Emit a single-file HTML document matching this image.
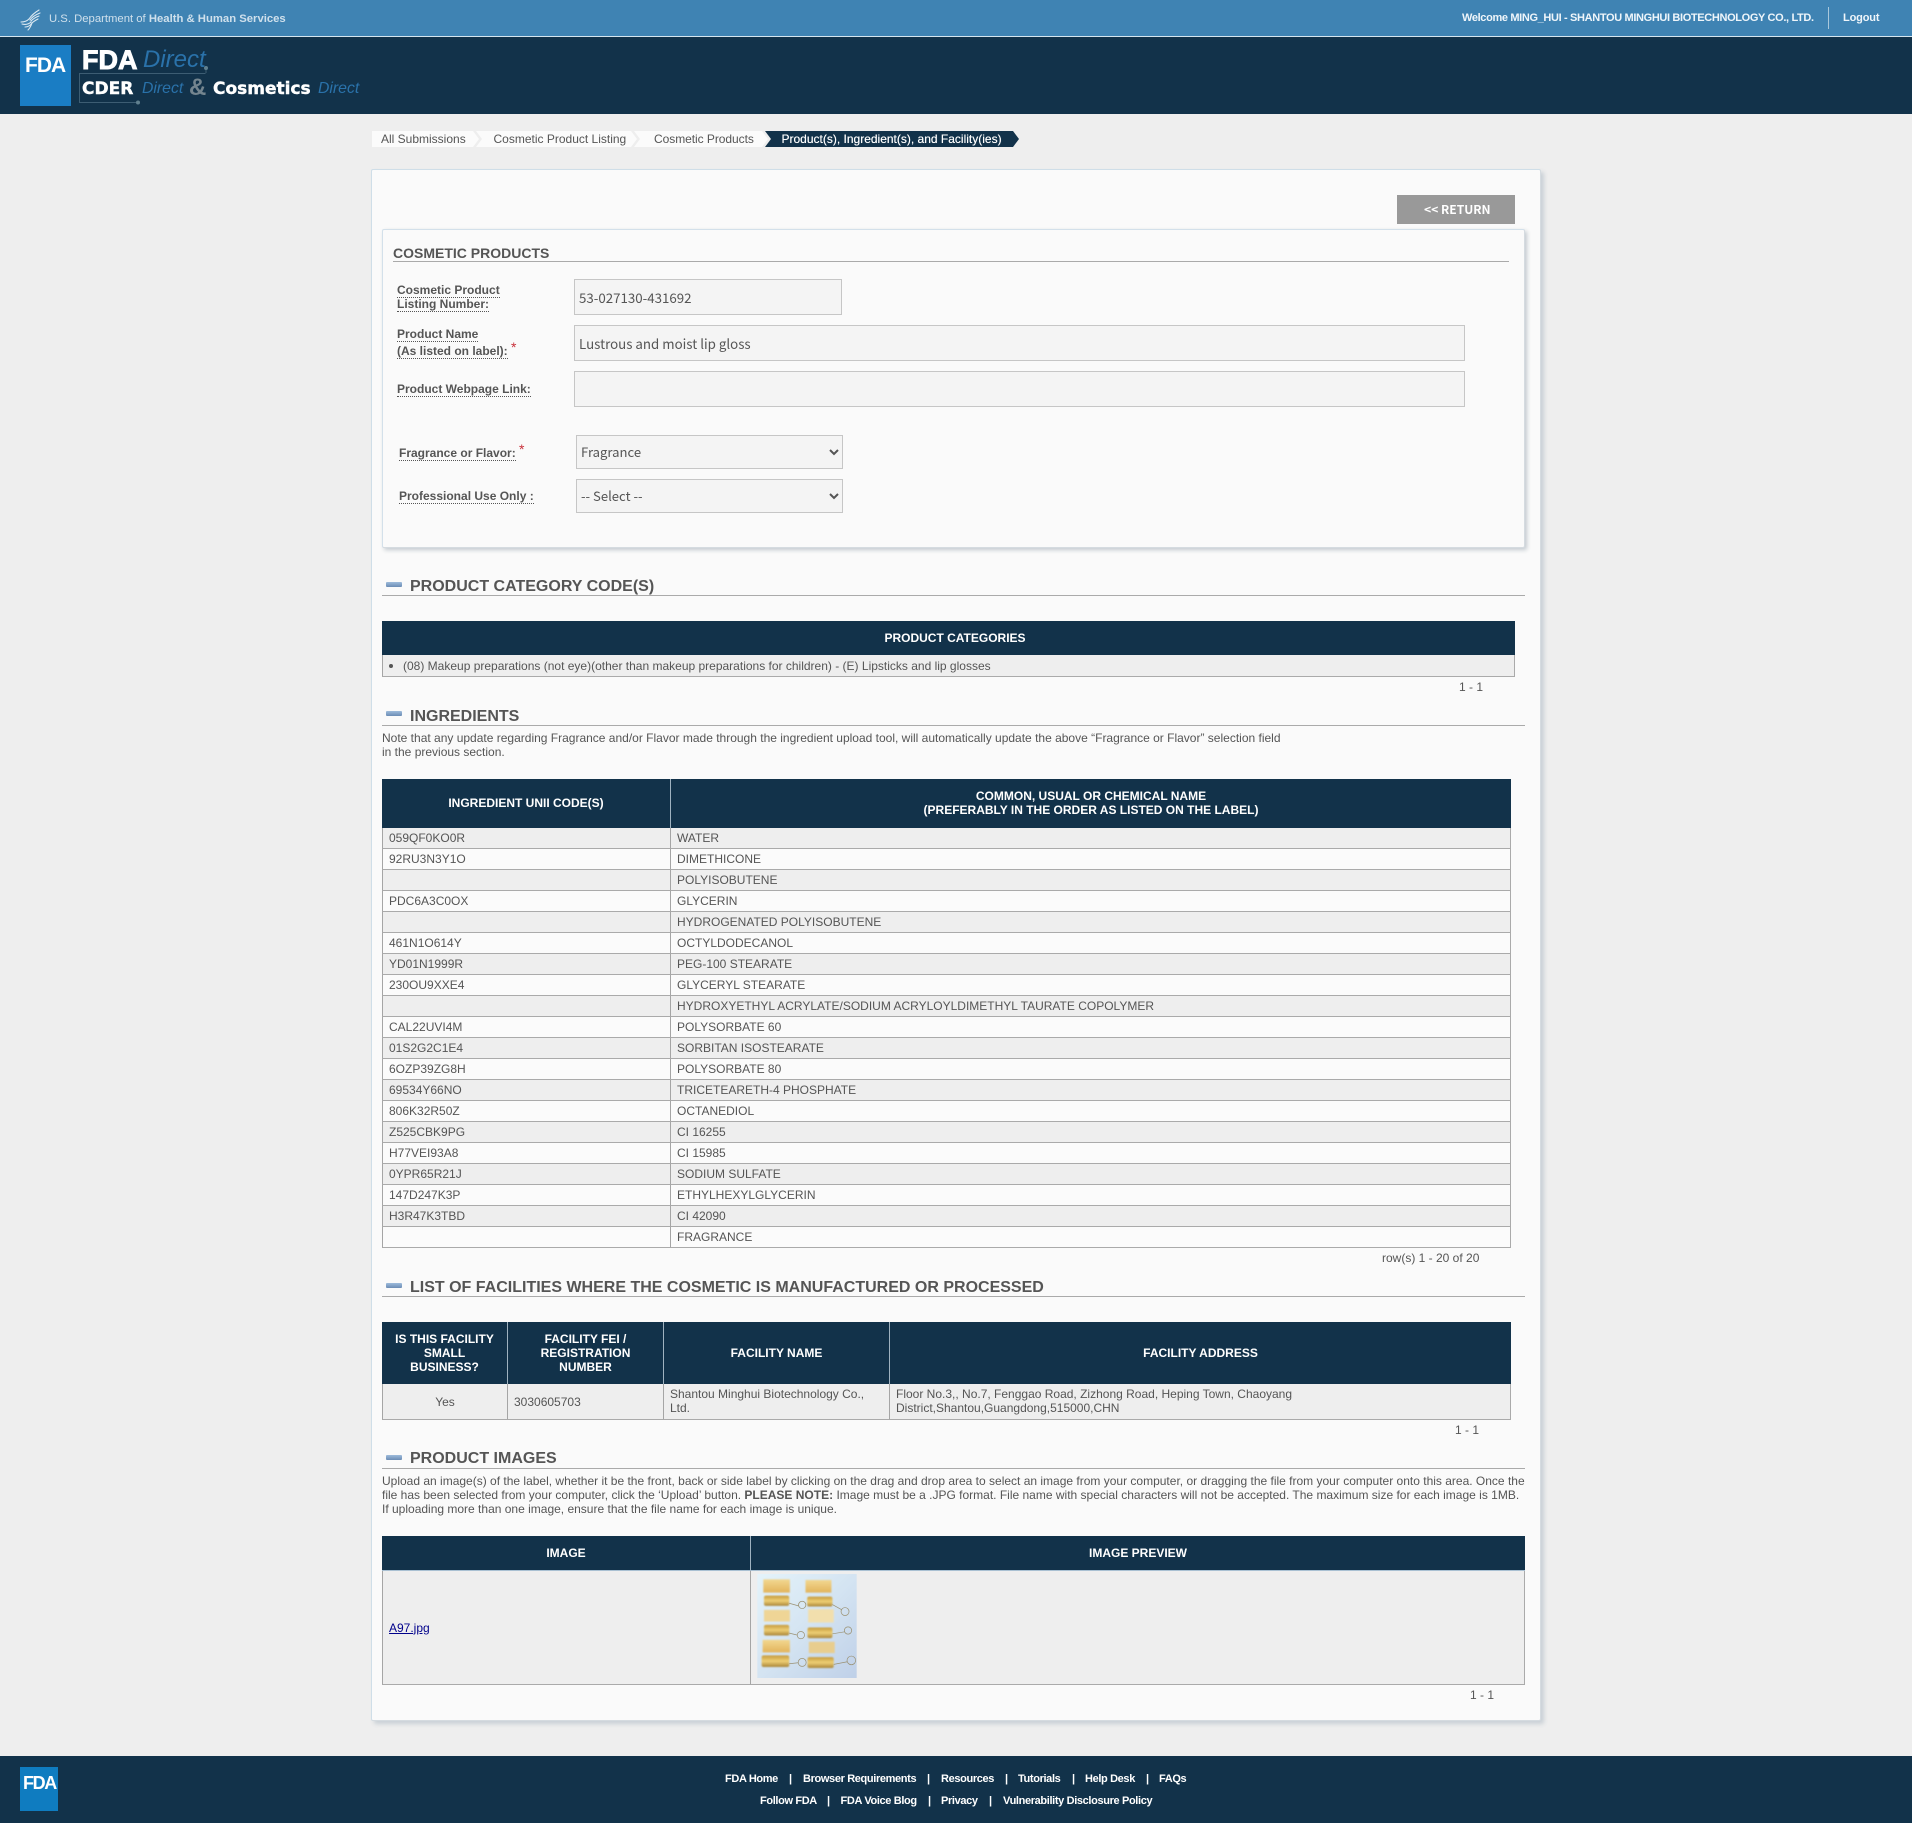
<!DOCTYPE html>
<html lang="en">
<head>
<meta charset="utf-8">
<title>FDA Direct - Cosmetic Products</title>
<style>
html,body{margin:0;padding:0;background:#eeeeee}
body{width:1912px;height:1823px;position:relative;overflow:hidden;font-family:"Liberation Sans",Arial,sans-serif;font-size:12px;color:#555}
.a{position:absolute}
.t{position:absolute;white-space:nowrap;line-height:14px}
.b{font-weight:bold}
.nv{background:#12324a}
.w{color:#fff}
.lab{position:absolute;white-space:nowrap;line-height:14px;font-weight:bold;color:#555;font-size:12px;border-bottom:1px dotted #555;height:14px;padding-bottom:0}
.star{position:absolute;color:#c8303a;font-size:14px;line-height:14px}
.inp{position:absolute;box-sizing:border-box;background:#f4f4f4;border:1px solid #c6c6c6;padding:0 0 0 4px;margin:0;font-family:"Noto Sans CJK JP","Liberation Sans",sans-serif;font-size:13.3px;color:#555;outline:none;border-radius:0}
select.inp{padding:0 0 2px 0;font-size:13.1px}
.sec-i{position:absolute;left:386px;width:16px;height:5px;background:linear-gradient(#9dbbdb,#6b8cb4);border-radius:1px}
.sec{position:absolute;left:410px;white-space:nowrap;line-height:18px;font-size:16px;font-weight:bold;color:#555}
.ln{position:absolute;left:382px;width:1143px;height:1px;background:#aaa}
table{position:absolute;border-collapse:separate;border-spacing:0;table-layout:fixed;font-size:12px;color:#555}
th{background:#12324a;color:#fff;font-weight:bold;text-align:center;padding:0;line-height:14px;box-sizing:border-box}
td{box-sizing:border-box;padding:0 0 0 6px;line-height:14px;border-bottom:1px solid #aaa;white-space:nowrap}
td.l,th.l{border-left:1px solid #a5a5a5}
th.d{border-left:1px solid #9fb2c0}
td.r{border-right:1px solid #aaa}
tr.o td{background:#eeeeee}
tr.e td{background:#fbfbfb}
.fl{position:absolute;white-space:nowrap;color:#fff;font-weight:bold;font-size:11px;line-height:14px;letter-spacing:-.36px}
</style>
</head>
<body>
<!-- top bar -->
<div class="a" style="left:0;top:0;width:1912px;height:36px;background:#3f83b3"></div>
<div class="a" style="left:0;top:36px;width:1912px;height:1px;background:#d5e6f0"></div>
<div class="a nv" style="left:0;top:37px;width:1912px;height:77px"></div>
<svg class="a" style="left:19px;top:9px" width="24" height="23" viewBox="0 0 24 23" fill="none" stroke="#dbe8f1" stroke-width="1.1" stroke-linecap="round">
<path d="M2 13c4 0 6-1 8-3M3 15c4 1 7 0 9-2M6 18c3 0 5-1 7-4M9 21c2-2 3-4 4-7"/>
<path d="M10 10c2-3 5-6 10-9M11 11c2-3 5-5 10-7M12 12c3-3 5-4 8-5M13 14c2-2 4-3 6-4"/>
</svg>
<div class="t" style="left:49px;top:12px;font-size:11.3px;color:#cfe0ec">U.S. Department of <span class="b">Health &amp; Human Services</span></div>
<div class="t b" style="left:1462px;top:11px;font-size:11px;color:#eef5fa;letter-spacing:-.35px">Welcome MING_HUI - SHANTOU MINGHUI BIOTECHNOLOGY CO., LTD.</div>
<div class="a" style="left:1828px;top:7px;width:1px;height:22px;background:#a9c8dc"></div>
<div class="t b" style="left:1843px;top:11px;font-size:11px;color:#eef5fa;letter-spacing:-.15px">Logout</div>

<!-- logo -->
<div class="a" style="left:20px;top:45px;width:51px;height:61px;background:#1a7dc4"></div>
<div class="t b w" style="left:25px;top:56px;font-size:21px;line-height:20px;letter-spacing:-1px">FDA</div>
<div class="t b w" style="left:82px;top:47px;font-size:27px;line-height:26px;-webkit-text-stroke:.9px #fff">FDA</div>
<div class="t" style="left:143px;top:47px;font-size:24px;line-height:26px;font-style:italic;color:#2a72aa">Direct</div>
<svg class="a" style="left:76px;top:62px" width="140" height="48" viewBox="0 0 140 48" fill="none" stroke="#3d5d73" stroke-width="1">
<path d="M129.5 11.5H3.5V40.5H62"/><path d="M130 11V6"/>
<circle cx="130" cy="6" r="2" fill="#60808f" stroke="none"/><circle cx="62" cy="40.5" r="2" fill="#60808f" stroke="none"/>
</svg>
<div class="t b w" style="left:82px;top:79px;font-size:17px;line-height:20px;font-family:'DejaVu Sans',sans-serif;-webkit-text-stroke:.4px #fff">CDER</div>
<div class="t" style="left:142px;top:79px;font-size:15.8px;line-height:20px;font-style:italic;color:#2a72aa">Direct</div>
<div class="t b" style="left:189px;top:76px;font-size:24px;line-height:24px;color:#74858f">&amp;</div>
<div class="t b w" style="left:213px;top:79px;font-size:17px;line-height:20px;font-family:'DejaVu Sans',sans-serif;-webkit-text-stroke:.4px #fff">Cosmetics</div>
<div class="t" style="left:318px;top:79px;font-size:15.8px;line-height:20px;font-style:italic;color:#2a72aa">Direct</div>

<!-- breadcrumb -->
<svg class="a" style="left:372px;top:131px" width="650" height="16" viewBox="0 0 650 16">
<polygon points="0,0 101,0 107,8 101,16 0,16" fill="#fbfbfb"/>
<polygon points="104,0 259,0 265,8 259,16 104,16 110,8" fill="#fbfbfb"/>
<polygon points="262,0 390,0 396,8 390,16 262,16 268,8" fill="#fbfbfb"/>
<polygon points="393,0 641,0 647,8 641,16 393,16 399,8" fill="#12324a"/>
</svg>
<div class="t" style="left:381px;top:132px">All Submissions</div>
<div class="t" style="left:493.5px;top:132px">Cosmetic Product Listing</div>
<div class="t" style="left:654px;top:132px;letter-spacing:-.05px">Cosmetic Products</div>
<div class="t w" style="left:781.5px;top:132px;letter-spacing:0;text-shadow:0 0 .4px #fff">Product(s), Ingredient(s), and Facility(ies)</div>

<!-- main panel -->
<div class="a" style="left:371px;top:169px;width:1168px;height:1550px;background:#fafafa;border:1px solid #cfdee8;border-right-color:#d5dbe0;border-bottom-color:#d5dbe0;box-shadow:3px 3px 4px #c9d0d6;border-radius:2px"></div>
<div class="a" style="left:1397px;top:195px;width:118px;height:29px;background:#999"></div>
<div class="t b w" style="left:1424px;top:202px;font-size:12.1px;line-height:16px;font-family:'Noto Sans CJK JP','Liberation Sans',sans-serif">&lt;&lt; RETURN</div>

<!-- inner panel -->
<div class="a" style="left:382px;top:229px;width:1141px;height:317px;background:#fafafa;border:1px solid #d3e0ea;border-right-color:#d5dbe0;border-bottom-color:#d5dbe0;box-shadow:2px 2px 4px #c2c9cf;border-radius:2px"></div>
<div class="t b" style="left:393px;top:246px;font-size:14px">COSMETIC PRODUCTS</div>
<div class="a" style="left:393px;top:261px;width:1116px;height:1px;background:#aaa"></div>

<div class="lab" style="left:397px;top:283px">Cosmetic Product</div>
<div class="lab" style="left:397px;top:297px">Listing Number:</div>
<div class="lab" style="left:397px;top:327px">Product Name</div>
<div class="lab" style="left:397px;top:344px">(As listed on label):</div>
<div class="star" style="left:511px;top:340px">*</div>
<div class="lab" style="left:399px;top:446px">Fragrance or Flavor:</div>
<div class="star" style="left:519px;top:442px">*</div>
<div class="lab" style="left:397px;top:382px">Product Webpage Link:</div>
<div class="lab" style="left:399px;top:489px">Professional Use Only :</div>

<input class="inp" style="left:574px;top:279px;width:268px;height:36px" value="53-027130-431692" readonly>
<input class="inp" style="left:574px;top:325px;width:891px;height:36px" value="Lustrous and moist lip gloss" readonly>
<input class="inp" style="left:574px;top:371px;width:891px;height:36px" value="" readonly>
<select class="inp" style="left:576px;top:435px;width:267px;height:34px"><option>Fragrance</option></select>
<select class="inp" style="left:576px;top:479px;width:267px;height:34px"><option>-- Select --</option></select>

<!-- categories -->
<div class="sec-i" style="top:582px"></div>
<div class="sec" style="top:578px">PRODUCT CATEGORY CODE(S)</div>
<div class="ln" style="top:595px"></div>
<table style="left:382px;top:621px;width:1133px">
<colgroup><col style="width:1133px"></colgroup>
<tr><th class="b" style="height:34px;padding-left:13px">PRODUCT CATEGORIES</th></tr>
<tr class="o"><td class="l r" style="height:22px;padding-left:20px;position:relative"><span class="a" style="left:6px;top:9px;width:4px;height:4px;border-radius:50%;background:#555"></span>(08) Makeup preparations (not eye)(other than makeup preparations for children) - (E) Lipsticks and lip glosses</td></tr>
</table>
<div class="t" style="left:1459px;top:680px">1 - 1</div>

<!-- ingredients -->
<div class="sec-i" style="top:711px"></div>
<div class="sec" style="top:708px">INGREDIENTS</div>
<div class="ln" style="top:725px"></div>
<div class="t" style="left:382px;top:731px">Note that any update regarding Fragrance and/or Flavor made through the ingredient upload tool, will automatically update the above “Fragrance or Flavor” selection field<br>in the previous section.</div>

<table style="left:382px;top:779px;width:1129px">
<colgroup><col style="width:288px"><col style="width:841px"></colgroup>
<tr><th style="height:49px;padding-bottom:2px">INGREDIENT UNII CODE(S)</th><th class="d" style="padding-bottom:2px">COMMON, USUAL OR CHEMICAL NAME<br>(PREFERABLY IN THE ORDER AS LISTED ON THE LABEL)</th></tr>
<tr class="o"><td class="l" style="height:21px">059QF0KO0R</td><td class="l r">WATER</td></tr>
<tr class="e"><td class="l" style="height:21px">92RU3N3Y1O</td><td class="l r">DIMETHICONE</td></tr>
<tr class="o"><td class="l" style="height:21px"></td><td class="l r">POLYISOBUTENE</td></tr>
<tr class="e"><td class="l" style="height:21px">PDC6A3C0OX</td><td class="l r">GLYCERIN</td></tr>
<tr class="o"><td class="l" style="height:21px"></td><td class="l r">HYDROGENATED POLYISOBUTENE</td></tr>
<tr class="e"><td class="l" style="height:21px">461N1O614Y</td><td class="l r">OCTYLDODECANOL</td></tr>
<tr class="o"><td class="l" style="height:21px">YD01N1999R</td><td class="l r">PEG-100 STEARATE</td></tr>
<tr class="e"><td class="l" style="height:21px">230OU9XXE4</td><td class="l r">GLYCERYL STEARATE</td></tr>
<tr class="o"><td class="l" style="height:21px"></td><td class="l r">HYDROXYETHYL ACRYLATE/SODIUM ACRYLOYLDIMETHYL TAURATE COPOLYMER</td></tr>
<tr class="e"><td class="l" style="height:21px">CAL22UVI4M</td><td class="l r">POLYSORBATE 60</td></tr>
<tr class="o"><td class="l" style="height:21px">01S2G2C1E4</td><td class="l r">SORBITAN ISOSTEARATE</td></tr>
<tr class="e"><td class="l" style="height:21px">6OZP39ZG8H</td><td class="l r">POLYSORBATE 80</td></tr>
<tr class="o"><td class="l" style="height:21px">69534Y66NO</td><td class="l r">TRICETEARETH-4 PHOSPHATE</td></tr>
<tr class="e"><td class="l" style="height:21px">806K32R50Z</td><td class="l r">OCTANEDIOL</td></tr>
<tr class="o"><td class="l" style="height:21px">Z525CBK9PG</td><td class="l r">CI 16255</td></tr>
<tr class="e"><td class="l" style="height:21px">H77VEI93A8</td><td class="l r">CI 15985</td></tr>
<tr class="o"><td class="l" style="height:21px">0YPR65R21J</td><td class="l r">SODIUM SULFATE</td></tr>
<tr class="e"><td class="l" style="height:21px">147D247K3P</td><td class="l r">ETHYLHEXYLGLYCERIN</td></tr>
<tr class="o"><td class="l" style="height:21px">H3R47K3TBD</td><td class="l r">CI 42090</td></tr>
<tr class="e"><td class="l" style="height:21px"></td><td class="l r">FRAGRANCE</td></tr>
</table>
<div class="t" style="left:1382px;top:1251px">row(s) 1 - 20 of 20</div>

<!-- facilities -->
<div class="sec-i" style="top:1283px"></div>
<div class="sec" style="top:1279px">LIST OF FACILITIES WHERE THE COSMETIC IS MANUFACTURED OR PROCESSED</div>
<div class="ln" style="top:1296px"></div>
<table style="left:382px;top:1322px;width:1129px">
<colgroup><col style="width:125px"><col style="width:156px"><col style="width:226px"><col style="width:622px"></colgroup>
<tr><th style="height:62px">IS THIS FACILITY<br>SMALL<br>BUSINESS?</th><th class="d">FACILITY FEI /<br>REGISTRATION<br>NUMBER</th><th class="d">FACILITY NAME</th><th class="d">FACILITY ADDRESS</th></tr>
<tr class="o"><td class="l" style="height:36px;text-align:center;padding:0">Yes</td><td class="l">3030605703</td><td class="l" style="padding-bottom:1px">Shantou Minghui Biotechnology Co.,<br>Ltd.</td><td class="l r" style="padding-bottom:1px">Floor No.3,, No.7, Fenggao Road, Zizhong Road, Heping Town, Chaoyang<br>District,Shantou,Guangdong,515000,CHN</td></tr>
</table>
<div class="t" style="left:1455px;top:1423px">1 - 1</div>

<!-- images -->
<div class="sec-i" style="top:1455px"></div>
<div class="sec" style="top:1450px">PRODUCT IMAGES</div>
<div class="ln" style="top:1468px"></div>
<div class="t" style="left:382px;top:1474px">Upload an image(s) of the label, whether it be the front, back or side label by clicking on the drag and drop area to select an image from your computer, or dragging the file from your computer onto this area. Once the<br>file has been selected from your computer, click the ‘Upload’ button. <b>PLEASE NOTE:</b> Image must be a .JPG format. File name with special characters will not be accepted. The maximum size for each image is 1MB.<br>If uploading more than one image, ensure that the file name for each image is unique.</div>
<table style="left:382px;top:1536px;width:1143px">
<colgroup><col style="width:368px"><col style="width:775px"></colgroup>
<tr><th style="height:35px;border-bottom:1px solid #a9c0d2">IMAGE</th><th class="d" style="border-bottom:1px solid #a9c0d2">IMAGE PREVIEW</th></tr>
<tr class="o"><td class="l" style="height:114px"><a style="color:#00008b;text-decoration:underline">A97.jpg</a></td><td class="l r"></td></tr>
</table>
<svg class="a" style="left:757px;top:1574px" width="100" height="104" viewBox="52 12 299 313">
<defs>
<linearGradient id="bg" x1="0" y1="0" x2="1" y2="1"><stop offset="0" stop-color="#e4f3fa"/><stop offset=".5" stop-color="#d4e4f2"/><stop offset="1" stop-color="#bfd0e8"/></linearGradient>
<linearGradient id="g1" x1="0" y1="0" x2="0" y2="1"><stop offset="0" stop-color="#f2d790"/><stop offset="1" stop-color="#e2b45c"/></linearGradient>
<linearGradient id="g2" x1="0" y1="0" x2="0" y2="1"><stop offset="0" stop-color="#c59a3c"/><stop offset=".5" stop-color="#eecf74"/><stop offset="1" stop-color="#a98436"/></linearGradient>
<filter id="bl"><feGaussianBlur stdDeviation="2.2"/></filter>
</defs>
<rect x="52" y="12" width="299" height="313" fill="url(#bg)"/>
<g filter="url(#bl)">
<rect x="70" y="28" width="80" height="40" fill="url(#g1)"/><rect x="197" y="30" width="78" height="38" fill="url(#g1)"/>
<rect x="72" y="77" width="76" height="31" rx="6" fill="url(#g2)"/><rect x="202" y="80" width="76" height="30" rx="6" fill="url(#g2)"/>
<rect x="72" y="120" width="78" height="35" fill="#efd596"/><rect x="205" y="118" width="77" height="40" fill="#f2dfad"/>
<rect x="72" y="165" width="76" height="32" rx="6" fill="url(#g2)"/><rect x="203" y="173" width="75" height="32" rx="6" fill="url(#g2)"/>
<rect x="68" y="210" width="82" height="38" fill="url(#g1)"/><rect x="207" y="216" width="78" height="34" fill="#e8cd8e"/>
<rect x="65" y="257" width="83" height="35" rx="6" fill="url(#g2)"/><rect x="203" y="262" width="79" height="33" rx="6" fill="url(#g2)"/>
</g>
<g fill="none" stroke="#9b9274" stroke-width="2.2">
<circle cx="187" cy="105" r="11"/><path d="M148 100l28 8"/>
<circle cx="316" cy="125" r="12"/><path d="M278 104l27 15"/>
<circle cx="183" cy="196" r="11"/><path d="M148 190l25 6"/>
<circle cx="325" cy="182" r="11"/><path d="M278 192l37-6"/>
<circle cx="187" cy="278" r="12"/><path d="M148 282l27-3"/>
<circle cx="335" cy="272" r="13"/><path d="M282 284l41-8"/>
</g>
</svg>
<div class="t" style="left:1470px;top:1688px">1 - 1</div>

<!-- footer -->
<div class="a nv" style="left:0;top:1756px;width:1912px;height:67px"></div>
<div class="a" style="left:20px;top:1767px;width:38px;height:44px;background:#0f7cc0"></div>
<div class="t b w" style="left:23px;top:1774px;font-size:18px;line-height:18px;letter-spacing:-1.4px">FDA</div>

<div class="fl" style="left:725px;top:1772px">FDA Home</div><div class="fl" style="left:789px;top:1772px">|</div>
<div class="fl" style="left:803px;top:1772px">Browser Requirements</div><div class="fl" style="left:927px;top:1772px">|</div>
<div class="fl" style="left:941px;top:1772px">Resources</div><div class="fl" style="left:1005px;top:1772px">|</div>
<div class="fl" style="left:1018px;top:1772px">Tutorials</div><div class="fl" style="left:1072px;top:1772px">|</div>
<div class="fl" style="left:1085px;top:1772px">Help Desk</div><div class="fl" style="left:1146px;top:1772px">|</div>
<div class="fl" style="left:1159px;top:1772px">FAQs</div>
<div class="fl" style="left:760px;top:1794px">Follow FDA</div><div class="fl" style="left:827px;top:1794px">|</div>
<div class="fl" style="left:840.5px;top:1794px">FDA Voice Blog</div><div class="fl" style="left:928px;top:1794px">|</div>
<div class="fl" style="left:941px;top:1794px">Privacy</div><div class="fl" style="left:989px;top:1794px">|</div>
<div class="fl" style="left:1003px;top:1794px">Vulnerability Disclosure Policy</div>
</body>
</html>
